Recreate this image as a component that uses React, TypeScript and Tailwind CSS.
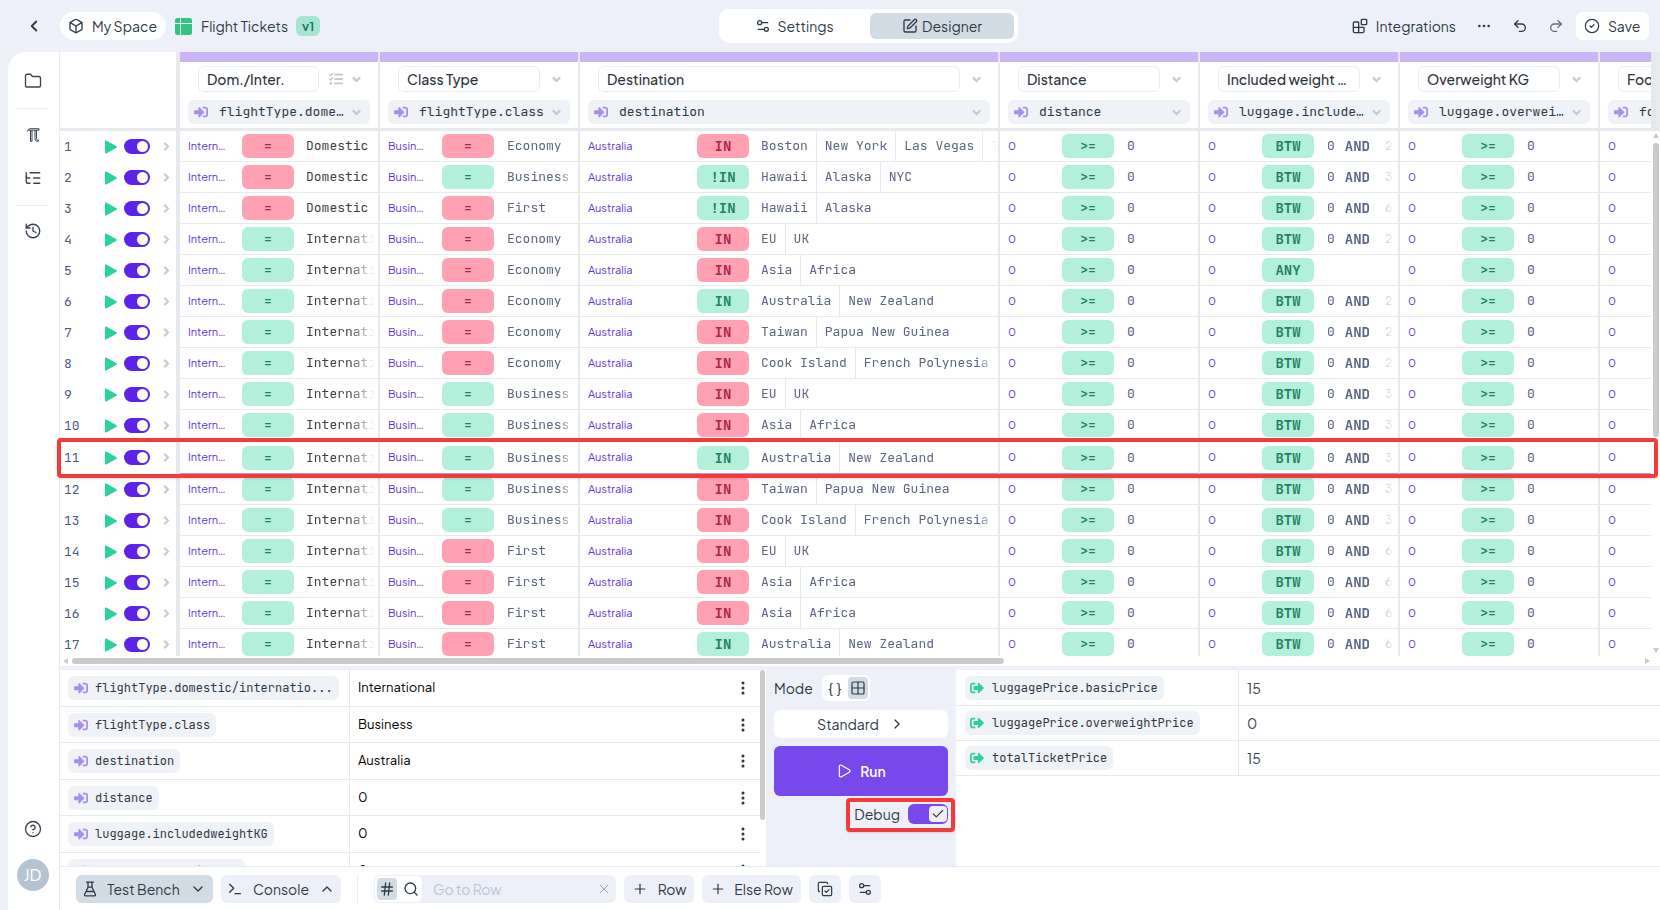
import React from "react";
import {
  Blocks, Box, Check, ChevronDown, ChevronLeft, ChevronRight, ChevronUp, CircleCheck, CircleQuestionMark, CopyCheck,
  Ellipsis, Folder, Grid2x2, Hash, History, ListTree, Play, Plus, Redo2, Search, Settings2, SquarePen,
  Terminal, Undo2, X,
} from "lucide-react";
import { FaChevronDown, FaChevronRight, FaSignInAlt, FaSignOutAlt, FaTasks } from "react-icons/fa";
import { BsThreeDotsVertical } from "react-icons/bs";

const mono = "font-['JetBrains_Mono','DejaVu_Sans_Mono',monospace] [font-variant-ligatures:none]";

type Tone = "hit" | "miss";
type Row = { dom: [Tone, string]; cls: [Tone, string]; dest: [Tone, string, string[]]; max: string | null };

const D: [Tone, string] = ["miss", "Domestic"];
const I: [Tone, string] = ["hit", "International"];
const E: [Tone, string] = ["miss", "Economy"];
const B: [Tone, string] = ["hit", "Business"];
const F: [Tone, string] = ["miss", "First"];

const rows: Row[] = [
  { dom: D, cls: E, dest: ["miss", "IN", ["Boston", "New York", "Las Vegas", "Texas"]], max: "24" },
  { dom: D, cls: B, dest: ["hit", "!IN", ["Hawaii", "Alaska", "NYC"]], max: "30" },
  { dom: D, cls: F, dest: ["hit", "!IN", ["Hawaii", "Alaska"]], max: "60" },
  { dom: I, cls: E, dest: ["miss", "IN", ["EU", "UK"]], max: "24" },
  { dom: I, cls: E, dest: ["miss", "IN", ["Asia", "Africa"]], max: null },
  { dom: I, cls: E, dest: ["hit", "IN", ["Australia", "New Zealand"]], max: "24" },
  { dom: I, cls: E, dest: ["miss", "IN", ["Taiwan", "Papua New Guinea"]], max: "24" },
  { dom: I, cls: E, dest: ["miss", "IN", ["Cook Island", "French Polynesia"]], max: "24" },
  { dom: I, cls: B, dest: ["miss", "IN", ["EU", "UK"]], max: "30" },
  { dom: I, cls: B, dest: ["miss", "IN", ["Asia", "Africa"]], max: "30" },
  { dom: I, cls: B, dest: ["hit", "IN", ["Australia", "New Zealand"]], max: "30" },
  { dom: I, cls: B, dest: ["miss", "IN", ["Taiwan", "Papua New Guinea"]], max: "30" },
  { dom: I, cls: B, dest: ["miss", "IN", ["Cook Island", "French Polynesia"]], max: "30" },
  { dom: I, cls: F, dest: ["miss", "IN", ["EU", "UK"]], max: "60" },
  { dom: I, cls: F, dest: ["miss", "IN", ["Asia", "Africa"]], max: "60" },
  { dom: I, cls: F, dest: ["miss", "IN", ["Asia", "Africa"]], max: "60" },
  { dom: I, cls: F, dest: ["hit", "IN", ["Australia", "New Zealand"]], max: "60" },
];

const columns = [
  { title: "Dom./Inter.", field: "flightType.domestic/international", wide: false, list: true },
  { title: "Class Type", field: "flightType.class", wide: false, list: false },
  { title: "Destination", field: "destination", wide: true, list: false },
  { title: "Distance", field: "distance", wide: false, list: false },
  { title: "Included weight KG", field: "luggage.includedweightKG", wide: false, list: false },
  { title: "Overweight KG", field: "luggage.overweightKG", wide: false, list: false },
  { title: "Food", field: "food", wide: false, list: false },
];

const inputs = [
  ["flightType.domestic/internatio...", "International"],
  ["flightType.class", "Business"],
  ["destination", "Australia"],
  ["distance", "0"],
  ["luggage.includedweightKG", "0"],
  ["luggage.overweightKG", "0"],
];

const outputs = [
  ["luggagePrice.basicPrice", "15"],
  ["luggagePrice.overweightPrice", "0"],
  ["totalTicketPrice", "15"],
];

function PiIcon() {
  return (
    <svg viewBox="0 0 16 16" className="size-4" fill="none" stroke="currentColor" strokeWidth="1" strokeLinejoin="round">
      <path d="M2.500 4.600q.2-2.900 2.600-2.900H14v1.500H3.500" />
      <path d="M5.500 3.200v11.200H7V3.200M10 3.200v8.500c0 1.900 1 2.800 3.400 2.500v-1.200c-1.300.1-1.900-.3-1.900-1.500V3.200" />
    </svg>
  );
}

function FlaskIcon() {
  return (
    <svg viewBox="0 0 14 16" className="h-4 w-3.5 shrink-0" fill="none" stroke="currentColor" strokeWidth="1.3" strokeLinejoin="round" strokeLinecap="round">
      <path d="M3.500 1.200h7M5 1.200v5L1.600 13.600c-.3.700.1 1.200.8 1.200h9.200c.7 0 1.100-.5.8-1.200L9 6.200v-5M5 6.200h4M3.600 10.500h6.800" />
    </svg>
  );
}

function SheetIcon() {
  return (
    <svg viewBox="0 0 17 17" className="size-[17px]" fill="#33c481">
      <path d="M2.500 0H5v5H0V2.500A2.500 2.500 0 0 1 2.500 0zM6 0h8.500A2.500 2.500 0 0 1 17 2.500V5H6zM0 6h5v11H2.500A2.500 2.500 0 0 1 0 14.500zM6 6h11v8.500a2.500 2.500 0 0 1-2.500 2.500H6z" />
    </svg>
  );
}

function Caret() {
  return <FaChevronDown className="mx-0.5 size-[9px] shrink-0 overflow-visible text-[#c3c7cc]" strokeWidth={50} />;
}

function Pill({ tone, children }: { tone: Tone; children: string }) {
  return (
    <button
      className={`h-6 w-[52px] shrink-0 rounded-md font-bold leading-6 ${mono} ${children.endsWith("=") ? "text-[13px]" : "text-sm"} ${
        tone === "hit" ? "bg-[#b2f0db] text-[#23805f]" : "bg-[#ffa1b3] text-[#a92747]"
      }`}
    >
      {children}
    </button>
  );
}

function Actual({ value, size }: { value: string; size: "short" | "long" | "tiny" }) {
  return (
    <span
      className={`shrink-0 truncate text-[11px] text-[#6330dd] ${
        size === "short" ? "w-10 mr-3.5" : size === "long" ? "w-[109px]" : "w-[54px]"
      }`}
    >
      {value}
    </span>
  );
}

function GridCell({ wide, active, children }: { wide?: boolean; active: boolean; children: React.ReactNode }) {
  return (
    <td
      className={`overflow-hidden border-r-2 border-r-[#e6eaed] p-0 ${wide ? "w-[420px]" : "w-[200px]"} ${
        active ? "border-y border-y-[#a99af0]" : "border-b border-b-[#e6eaed]"
      }`}
    >
      <div className="flex h-[30px] items-center overflow-hidden whitespace-nowrap pl-2">{children}</div>
    </td>
  );
}

const fade = "[mask-image:linear-gradient(to_right,black_calc(100%-28px),transparent_calc(100%-4px))]";
const fadeLong = "[mask-image:linear-gradient(to_right,black_calc(100%-20px),transparent_calc(100%-2px))]";

function GridRow({ row, n }: { row: Row; n: number }) {
  const active = n === 11;
  const value = `${mono} text-[13px] text-[#5a6680]`;
  return (
    <tr className={active ? "h-[33px]" : "h-[31px]"}>
      <th className="border-r-4 border-r-[#e6eaed] p-0 font-normal">
        <div className="flex h-[30px] items-center pl-1">
          <span className={`w-[41px] text-left text-[13px] text-[#4a5a85] ${mono}`}>{n}</span>
          <button aria-label={`Run row ${n}`} className="mr-[7px]">
            <svg viewBox="0 0 12 14" className="h-3.5 w-3 fill-[#2bd29c]">
              <path d="M0 1.200Q0 0 1.200.6L11.500 6.300q.9.700 0 1.400L1.200 13.400Q0 14 0 12.800z" />
            </svg>
          </button>
          <button role="switch" aria-checked="true" aria-label={`Enable row ${n}`} className="flex h-[15px] w-[26px] items-center justify-end rounded-full bg-[#5b24e6] pr-0.5">
            <span className="size-[11px] rounded-full bg-white" />
          </button>
          <button aria-label={`Expand row ${n}`} className="ml-3">
            <FaChevronRight className="size-[9px] overflow-visible text-[#c3c7cc]" strokeWidth={50} />
          </button>
        </div>
      </th>
      <GridCell active={active}>
        <Actual value="International" size="short" />
        <Pill tone={row.dom[0]}>=</Pill>
        <span className={`ml-3 flex-1 overflow-hidden ${mono} text-[13px] text-[#3c3f45] ${row.dom[1].length > 8 ? fade : ""}`}>{row.dom[1]}</span>
      </GridCell>
      <GridCell active={active}>
        <Actual value="Business" size="short" />
        <Pill tone={row.cls[0]}>=</Pill>
        <span className={`ml-[13px] flex-1 overflow-hidden ${value} ${fadeLong}`}>{row.cls[1]}</span>
      </GridCell>
      <GridCell wide active={active}>
        <Actual value="Australia" size="long" />
        <Pill tone={row.dest[0]}>{row.dest[1]}</Pill>
        <div className={`ml-1 flex h-[30px] flex-1 overflow-hidden ${value} ${fadeLong}`}>
          {row.dest[2].map((d) => (
            <span key={d} className="shrink-0 border-r border-[#e6eaed] px-2 leading-[30px] last:border-r-0">{d}</span>
          ))}
        </div>
      </GridCell>
      <GridCell active={active}>
        <Actual value="0" size="tiny" />
        <Pill tone="hit">&gt;=</Pill>
        <span className={`ml-[13px] ${value}`}>0</span>
      </GridCell>
      <GridCell active={active}>
        <Actual value="0" size="tiny" />
        <Pill tone="hit">{row.max ? "BTW" : "ANY"}</Pill>
        {row.max && (
          <div className={`ml-[13px] flex flex-1 items-center overflow-hidden ${value} ${fade}`}>
            <span>0</span>
            <b className="ml-2.5 text-sm">AND</b>
            <span className="ml-[15px]">{row.max}</span>
          </div>
        )}
      </GridCell>
      <GridCell active={active}>
        <Actual value="0" size="tiny" />
        <Pill tone="hit">&gt;=</Pill>
        <span className={`ml-[13px] ${value}`}>0</span>
      </GridCell>
      <GridCell active={active}>
        <Actual value="0" size="tiny" />
        <Pill tone="hit">=</Pill>
      </GridCell>
    </tr>
  );
}

function RuleGrid() {
  return (
    <section className="flex h-[614px] shrink-0 flex-col bg-white">
      <div className="flex min-h-0 flex-1">
        <div className="min-w-0 flex-1 overflow-hidden">
          <table className="w-[1740px] table-fixed border-separate border-spacing-0">
            <thead>
              <tr className="h-[79px]">
                <th className="w-[120px] border-r-4 border-b-3 border-[#e6eaed] p-0" aria-label="Row" />
                {columns.map((c) => (
                  <th key={c.title} className={`border-r-2 border-b-3 border-[#e6eaed] p-0 align-top font-normal ${c.wide ? "w-[420px]" : "w-[200px]"}`}>
                    <div className="h-2.5 bg-[#c8b6f7]" />
                    <div className="flex items-center pt-1 pr-[15px] pl-[18px]">
                      <input
                        aria-label={`${c.title} column name`}
                        defaultValue={c.title}
                        className="h-[26px] min-w-0 flex-1 text-ellipsis rounded-md border border-[#eaedf6] px-2 text-sm font-medium text-[#2c3440]"
                      />
                      {c.list && <FaTasks className="ml-2.5 size-3.5 text-[#c3c7cc]" />}
                      <button aria-label={`${c.title} menu`} className={c.list ? "ml-[7px]" : "ml-2.5"}><Caret /></button>
                    </div>
                    <button className="mx-2 mt-2 flex h-6 w-[calc(100%-16px)] items-center rounded-md bg-[#eff2f7] pr-[7px] pl-1.5 text-left">
                      <FaSignInAlt className="size-3.5 shrink-0 text-[#a98fec]" />
                      <span className={`ml-[11px] min-w-0 flex-1 truncate text-[13px] text-[#333840] ${mono}`}>{c.field}</span>
                      <Caret />
                    </button>
                  </th>
                ))}
              </tr>
            </thead>
            <tbody>
              {rows.map((r, i) => <GridRow key={i} row={r} n={i + 1} />)}
            </tbody>
          </table>
        </div>
        <div className="flex w-[9px] shrink-0 flex-col items-center">
          <div className="h-[79px] w-full bg-[#e6eaed]" />
          <svg viewBox="0 0 6 5" className="mt-0.5 mb-[5px] h-[5px] w-1.5 shrink-0 fill-[#cbcbcb]"><path d="M3 0l3 5H0z" /></svg>
          <div className="h-[294px] w-1.5 shrink-0 rounded-full bg-[#cbcbcb]" />
          <svg viewBox="0 0 6 5" className="mt-auto mb-[3px] h-[5px] w-1.5 shrink-0 fill-[#cbcbcb]"><path d="M3 5l3-5H0z" /></svg>
        </div>
      </div>
      <div className="flex h-2.5 shrink-0 items-center pr-2.5 pl-[3px]">
        <svg viewBox="0 0 5 6" className="mr-1 h-1.5 w-[5px] fill-[#cbcbcb]"><path d="M0 3l5-3v6z" /></svg>
        <div className="h-1.5 w-[932px] rounded-full bg-[#cbcbcb]" />
        <svg viewBox="0 0 5 6" className="ml-auto h-1.5 w-[5px] fill-[#cbcbcb]"><path d="M5 3L0 0v6z" /></svg>
      </div>
    </section>
  );
}

function Chip({ out, children }: { out?: boolean; children: React.ReactNode }) {
  return (
    <span className={`flex h-6 w-fit items-center rounded-md bg-[#eff2f7] pr-1.5 text-xs text-[#333840] ${mono} ${out ? "gap-2 pl-[5px]" : "gap-[7px] pl-1.5"}`}>
      {out ? <FaSignOutAlt className="size-3.5 text-[#2bd29c]" /> : <FaSignInAlt className="size-3.5 text-[#a98fec]" />}
      {children}
    </span>
  );
}

function TestBench() {
  return (
    <section className="mt-1 flex min-h-0 flex-1">
      <div className="flex w-[706px] shrink-0 overflow-hidden bg-white">
        <table className="h-fit w-[700px] table-fixed border-separate border-spacing-0 text-[13px]">
          <tbody>
            {inputs.map(([name, value]) => (
              <tr key={name} className="h-[37px] even:h-9">
                <th className="w-[290px] border-r border-b border-[#e6eaed] py-0 pl-2 font-normal"><Chip>{name}</Chip></th>
                <td className="border-b border-[#e6eaed] py-0 pl-2 text-black">{value}</td>
                <td className="w-[34px] border-b border-[#e6eaed] p-0">
                  <button aria-label={`${name} options`} className="ml-[9px] block"><BsThreeDotsVertical className="size-4 text-[#2c3440]" /></button>
                </td>
              </tr>
            ))}
          </tbody>
        </table>
        <div className="h-[150px] w-[5px] rounded-full bg-[#cbcbcb]" />
      </div>
      <div className="flex w-[190px] shrink-0 flex-col px-2 pt-[5px] text-sm text-[#2f3a45]">
        <div className="flex items-center gap-[9px]">
          <span>Mode</span>
          <div className="flex h-[26px] w-12 items-center rounded-md bg-white pr-0.5">
            <button aria-label="JSON mode" className="flex flex-1 justify-center gap-1 text-sm"><span>{"{"}</span><span>{"}"}</span></button>
            <button aria-label="Table mode" className="flex h-[22px] w-5 items-center justify-center rounded bg-[#d2dce4]"><Grid2x2 className="size-4" strokeWidth={1.800} /></button>
          </div>
        </div>
        <button className="mt-[9px] flex h-7 items-center justify-center gap-2.5 rounded-md bg-white">Standard <ChevronRight className="size-4" /></button>
        <button className="mt-2 flex h-[50px] items-center justify-center gap-2 rounded-md bg-[#7849ea] font-semibold text-white"><Play className="size-4" strokeWidth={1.800} /> Run</button>
        <div className="relative mt-2 flex h-5 items-center justify-end gap-2">
          <span>Debug</span>
          <button role="switch" aria-checked="true" aria-label="Debug" className="flex h-5 w-10 items-center justify-end rounded-md bg-[#7849ea] pr-px">
            <span className="flex h-4 w-[18px] items-center justify-center rounded bg-[#edf0f8]"><Check className="size-3.5" /></span>
          </button>
          <div className="pointer-events-none absolute -top-1.5 -right-[7px] h-[34px] w-[109px] rounded border-4 border-[#f23b3b] shadow-sm" />
        </div>
      </div>
      <div className="min-w-0 flex-1 bg-white">
        <table className="w-full table-fixed border-separate border-spacing-0 text-sm text-[#3c4652]">
          <tbody>
            {outputs.map(([name, value]) => (
              <tr key={name} className="h-[35px] first:h-9">
                <th className="w-[283px] border-r border-b border-[#e6eaed] py-0 pl-[9px] font-normal"><Chip out>{name}</Chip></th>
                <td className="border-b border-[#e6eaed] py-0 pl-2">{value}</td>
              </tr>
            ))}
          </tbody>
        </table>
      </div>
    </section>
  );
}

function Footer() {
  const btn = "flex h-7 items-center justify-center rounded-md";
  const soft = `${btn} bg-[#edf0f8]`;
  return (
    <footer className="flex h-11 shrink-0 items-center border-t border-[#e6eaf2] bg-white pl-4 text-sm text-[#2f3a45]">
      <button className={`${btn} w-[137px] gap-2.5 bg-[#d2dce4]`}><FlaskIcon />Test Bench<ChevronDown className="size-4" /></button>
      <button className={`${soft} ml-2 w-[120px] gap-2.5`}><Terminal className="size-4" />Console<ChevronUp className="size-4" /></button>
      <div className="mx-4 h-7 w-px bg-[#e6eaf2]" />
      <div className="flex h-7 w-[242px] items-center rounded-md bg-[#edf0f8]">
        <div className="flex h-7 w-[49px] items-center gap-1.5 rounded-md border border-[#edf0f8] bg-white pl-0.5">
          <button aria-label="By number" className="flex h-[22px] w-5 items-center justify-center rounded bg-[#d2dce4]"><Hash className="size-4" /></button>
          <button aria-label="Search"><Search className="size-4" /></button>
        </div>
        <input aria-label="Go to Row" placeholder="Go to Row" className="ml-2.5 min-w-0 flex-1 bg-transparent text-sm outline-none placeholder:text-[#b9c5d6]" />
        <button aria-label="Clear" className="mr-1"><X className="size-4 text-[#9aa4b0]" strokeWidth={1.500} /></button>
      </div>
      <button className={`${soft} ml-2 w-[70px] gap-2.5`}><Plus className="size-4" strokeWidth={1.800} />Row</button>
      <button className={`${soft} ml-2 w-[99px] gap-2`}><Plus className="size-4" strokeWidth={1.800} />Else Row</button>
      <button aria-label="Select rows" className={`${soft} ml-2 w-8`}><CopyCheck className="size-4" strokeWidth={1.800} /></button>
      <button aria-label="Options" className={`${soft} ml-2 w-8`}><Settings2 className="size-4" /></button>
    </footer>
  );
}

function TopBar() {
  return (
    <header className="grid h-[52px] shrink-0 grid-cols-[11fr_299px_10fr] items-center pr-[11px] pl-[25px] text-sm text-[#2f3a45]">
      <div className="flex h-[34px] items-center">
        <button aria-label="Back"><ChevronLeft className="size-[18px]" strokeWidth={2.500} /></button>
        <button className="ml-[17px] flex h-7 w-[106px] items-center gap-2 rounded-full bg-white pl-2"><Box className="size-4" />My Space</button>
        <a href="#" className="ml-[9px] flex items-center gap-[9px]"><SheetIcon />Flight Tickets</a>
        <span className="ml-2 flex h-5 w-6 items-center justify-center rounded-md bg-[#a6e5d2] text-[13px] font-semibold text-[#13795b]">v1</span>
      </div>
      <nav className="flex h-[34px] rounded-[10px] bg-white p-1 pl-0">
        <button className="flex flex-1 items-center justify-center gap-1.5"><Settings2 className="size-4" />Settings</button>
        <button className="flex w-36 items-center justify-center gap-1 rounded-md bg-[#d2dce4]"><SquarePen className="size-4" />Designer</button>
      </nav>
      <div className="flex items-center justify-end">
        <button className="flex items-center gap-2"><Blocks className="size-4" />Integrations</button>
        <button aria-label="More" className="ml-5"><Ellipsis className="size-4" /></button>
        <button aria-label="Undo" className="ml-5"><Undo2 className="size-4" /></button>
        <button aria-label="Redo" className="ml-5 opacity-70"><Redo2 className="size-4" /></button>
        <button className="ml-3 flex h-7 w-[73px] items-center gap-2 rounded-md bg-white pl-2"><CircleCheck className="size-4" strokeWidth={1.800} />Save</button>
      </div>
    </header>
  );
}

function Sidebar() {
  return (
    <nav className="flex w-[52px] shrink-0 flex-col items-center rounded-tl-[18px] border-r border-[#e6eaf2] bg-white pt-5 pr-0.5 pb-[19px] text-[#3a4450]">
      <button aria-label="Files"><Folder className="size-[18px]" strokeWidth={1.800} /></button>
      <div className="mt-[18px] h-px w-[31px] bg-[#e6eaf2]" />
      <button aria-label="Functions" className="mt-[18px]"><PiIcon /></button>
      <button aria-label="Structure" className="mt-[26px]"><ListTree className="size-[18px]" strokeWidth={1.800} /></button>
      <div className="mt-[18px] h-px w-[31px] bg-[#e6eaf2]" />
      <button aria-label="History" className="mt-4"><History className="size-[18px]" strokeWidth={1.800} /></button>
      <button aria-label="Help" className="mt-auto"><CircleQuestionMark className="size-[18px]" strokeWidth={1.800} /></button>
      <button aria-label="Account" className="mt-[21px] size-8 rounded-full bg-[#b6c4d2] text-base leading-8 text-white">JD</button>
    </nav>
  );
}

export default function App() {
  return (
    <div className="flex h-screen min-h-[700px] flex-col overflow-hidden bg-[#edf0f8] font-['Plus_Jakarta_Sans','Inter',sans-serif]">
      <TopBar />
      <div className="flex min-h-0 flex-1 pl-2">
        <Sidebar />
        <main className="relative flex min-w-0 flex-1 flex-col">
          <RuleGrid />
          <TestBench />
          <Footer />
          <div className="pointer-events-none absolute top-[386px] right-0.5 -left-[3px] h-[40px] rounded border-4 border-[#f23b3b] shadow-sm" />
        </main>
      </div>
    </div>
  );
}
